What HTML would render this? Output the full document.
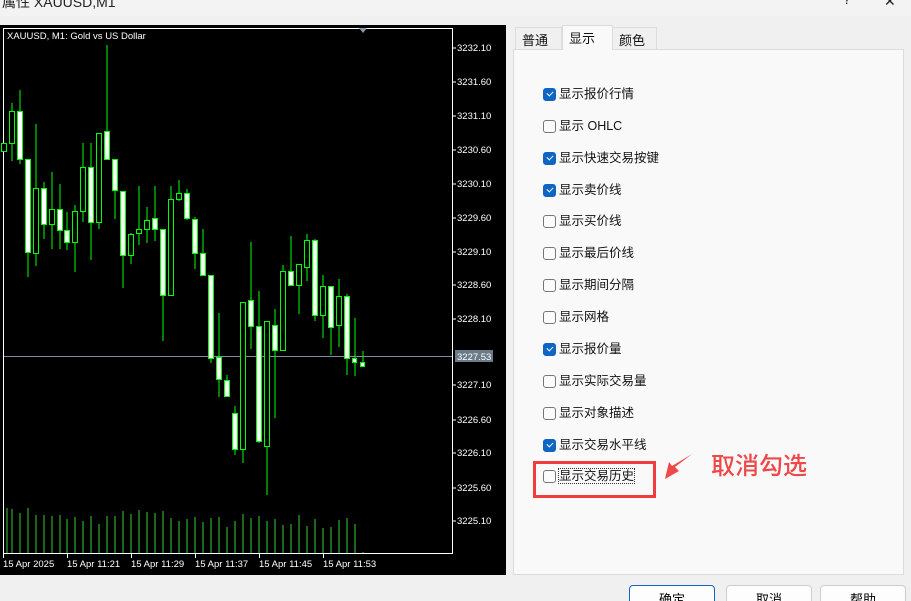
<!DOCTYPE html>
<html><head><meta charset="utf-8"><style>
*{margin:0;padding:0;box-sizing:border-box}
html,body{width:911px;height:601px;overflow:hidden}
body{background:#f0f0f0;font-family:"Liberation Sans","Noto Sans CJK SC",sans-serif;position:relative}
.title{position:absolute;left:0;top:0;width:911px;height:16px;background:#f3f3f3}
.title span{position:absolute;left:2px;top:-8px;font-size:14px;color:#222}
.chart{position:absolute;left:0;top:25px;width:506px;height:550px;background:#000}
.tab{position:absolute;top:26px;height:23px;border:1px solid #ddd;border-bottom:none;background:#f0f0f0;font-size:13px;padding:3px 0 0 6px;color:#111}
.panel{position:absolute;left:513px;top:49px;width:391px;height:526px;background:#f9f9f9;border:1px solid #dcdcdc}
.row{position:absolute;left:543px;font-size:12.5px;color:#111;height:14px;line-height:14px}
.cb{position:absolute;left:0;top:0;width:13px;height:13px;border:1px solid #777;border-radius:3px;background:#fbfbfb}
.cb.on{background:#0f66c2;border-color:#0f66c2}
.cb.on:after{content:"";position:absolute;left:3px;top:2px;width:5px;height:3px;border-left:1.3px solid #fff;border-bottom:1.3px solid #fff;transform:rotate(-45deg)}
.row span{position:absolute;left:16px;top:-1px;white-space:nowrap}
.btn{position:absolute;top:585px;height:24px;width:86px;border:1px solid #ccc;border-radius:4px;background:#fdfdfd;font-size:13px;text-align:center;padding-top:3px}
</style></head><body>
<div class="title"><span>属性 XAUUSD,M1</span><span style="left:843px;top:-9px">?</span><span style="left:884px;top:-7px">✕</span></div>
<div class="chart"></div>
<svg style="position:absolute;left:0;top:0" width="506" height="601" font-family="Liberation Sans" font-size="9.5">
<rect x="3.5" y="28.5" width="449" height="525" fill="none" stroke="#fff"/>
<polygon points="359,28 367,28 363,33" fill="#8a96a3"/>
<text x="7" y="39" fill="#fff" font-size="9.5">XAUUSD, M1:  Gold vs US Dollar</text>
<line x1="4" y1="356.5" x2="452" y2="356.5" stroke="#7d8da0"/>
<g stroke="#00ff00" stroke-width="1">
<line x1="12" y1="103" x2="12" y2="161"/><line x1="20" y1="90" x2="20" y2="164"/><line x1="28" y1="159" x2="28" y2="277"/><line x1="36" y1="124" x2="36" y2="266"/><line x1="44" y1="182" x2="44" y2="239"/><line x1="52" y1="172" x2="52" y2="249"/><line x1="60" y1="184" x2="60" y2="249"/><line x1="67" y1="212" x2="67" y2="250"/><line x1="75" y1="205" x2="75" y2="272"/><line x1="83" y1="143" x2="83" y2="222"/><line x1="91" y1="143" x2="91" y2="260"/><line x1="99" y1="133" x2="99" y2="229"/><line x1="107" y1="45" x2="107" y2="159"/><line x1="115" y1="159" x2="115" y2="219"/><line x1="123" y1="191" x2="123" y2="288"/><line x1="131" y1="233" x2="131" y2="264"/><line x1="139" y1="186" x2="139" y2="245"/><line x1="147" y1="207" x2="147" y2="243"/><line x1="155" y1="186" x2="155" y2="241"/><line x1="163" y1="229" x2="163" y2="341"/><line x1="171" y1="186" x2="171" y2="295"/><line x1="179" y1="180" x2="179" y2="201"/><line x1="187" y1="189" x2="187" y2="220"/><line x1="195" y1="217" x2="195" y2="269"/><line x1="203" y1="229" x2="203" y2="275"/><line x1="211" y1="275" x2="211" y2="363"/><line x1="219" y1="313" x2="219" y2="397"/><line x1="227" y1="375" x2="227" y2="397"/><line x1="235" y1="406" x2="235" y2="455"/><line x1="243" y1="302" x2="243" y2="463"/><line x1="251" y1="242" x2="251" y2="349"/><line x1="259" y1="291" x2="259" y2="443"/><line x1="267" y1="321" x2="267" y2="495"/><line x1="275" y1="309" x2="275" y2="418"/><line x1="283" y1="265" x2="283" y2="350"/><line x1="291" y1="236" x2="291" y2="285"/><line x1="299" y1="264" x2="299" y2="314"/><line x1="307" y1="234" x2="307" y2="281"/><line x1="315" y1="239" x2="315" y2="321"/><line x1="323" y1="275" x2="323" y2="338"/><line x1="331" y1="286" x2="331" y2="355"/><line x1="339" y1="279" x2="339" y2="347"/><line x1="347" y1="294" x2="347" y2="375"/><line x1="355" y1="318" x2="355" y2="376"/><line x1="363" y1="351" x2="363" y2="367"/>
</g>
<g stroke="#00ff00" stroke-width="1">
<rect x="1.5" y="143.5" width="5" height="8" fill="#000"/>
<rect x="9.5" y="111.5" width="5" height="32" fill="#000"/>
<rect x="17.5" y="111.5" width="5" height="48" fill="#fff"/>
<rect x="25.5" y="159.5" width="5" height="93" fill="#fff"/>
<rect x="33.5" y="188.5" width="5" height="65" fill="#000"/>
<rect x="41.5" y="188.5" width="5" height="36" fill="#fff"/>
<rect x="49.5" y="209.5" width="5" height="15" fill="#000"/>
<rect x="57.5" y="209.5" width="5" height="21" fill="#fff"/>
<rect x="64.5" y="230.5" width="5" height="12" fill="#fff"/>
<rect x="72.5" y="211.5" width="5" height="31" fill="#000"/>
<rect x="80.5" y="167.5" width="5" height="44" fill="#000"/>
<rect x="88.5" y="167.5" width="5" height="55" fill="#fff"/>
<rect x="96.5" y="133.5" width="5" height="89" fill="#000"/>
<rect x="104.5" y="131.5" width="5" height="28" fill="#fff"/>
<rect x="112.5" y="159.5" width="5" height="31" fill="#fff"/>
<rect x="120.5" y="191.5" width="5" height="64" fill="#fff"/>
<rect x="128.5" y="234.5" width="5" height="21" fill="#000"/>
<rect x="136.5" y="229.5" width="5" height="4" fill="#000"/>
<rect x="144.5" y="220.5" width="5" height="9" fill="#000"/>
<rect x="152.5" y="218.5" width="5" height="11" fill="#fff"/>
<rect x="160.5" y="229.5" width="5" height="66" fill="#fff"/>
<rect x="168.5" y="199.5" width="5" height="96" fill="#000"/>
<rect x="176.5" y="193.5" width="5" height="6" fill="#000"/>
<rect x="184.5" y="193.5" width="5" height="25" fill="#fff"/>
<rect x="192.5" y="219.5" width="5" height="34" fill="#fff"/>
<rect x="200.5" y="253.5" width="5" height="22" fill="#fff"/>
<rect x="208.5" y="275.5" width="5" height="83" fill="#fff"/>
<rect x="216.5" y="357.5" width="5" height="22" fill="#fff"/>
<rect x="224.5" y="380.5" width="5" height="16" fill="#fff"/>
<rect x="232.5" y="413.5" width="5" height="36" fill="#fff"/>
<rect x="240.5" y="302.5" width="5" height="147" fill="#000"/>
<rect x="248.5" y="300.5" width="5" height="26" fill="#fff"/>
<rect x="256.5" y="326.5" width="5" height="115" fill="#fff"/>
<rect x="264.5" y="321.5" width="5" height="125" fill="#000"/>
<rect x="272.5" y="325.5" width="5" height="25" fill="#fff"/>
<rect x="280.5" y="271.5" width="5" height="79" fill="#000"/>
<rect x="288.5" y="271.5" width="5" height="14" fill="#fff"/>
<rect x="296.5" y="264.5" width="5" height="21" fill="#000"/>
<rect x="304.5" y="240.5" width="5" height="27" fill="#000"/>
<rect x="312.5" y="240.5" width="5" height="75" fill="#fff"/>
<rect x="320.5" y="286.5" width="5" height="29" fill="#000"/>
<rect x="328.5" y="286.5" width="5" height="41" fill="#fff"/>
<rect x="336.5" y="296.5" width="5" height="29" fill="#000"/>
<rect x="344.5" y="296.5" width="5" height="62" fill="#fff"/>
<rect x="352.5" y="358.5" width="4" height="4" fill="#fff"/>
<rect x="360.5" y="362.5" width="4" height="4" fill="#fff"/>
</g>
<g stroke="#33cc33" stroke-width="1">
<path d="M7 508V553M12 509V553M20 513V553M28 508V553M36 515V553M44 515V553M52 516V553M60 515V553M67 519V553M75 517V553M83 521V553M91 516V553M99 524V553M107 516V553M115 516V553M123 511V553M131 514V553M139 510V553M147 512V553M155 513V553M163 511V553M171 518V553M179 521V553M187 519V553M195 517V553M203 522V553M211 518V553M219 517V553M227 527V553M235 521V553M243 514V553M251 518V553M259 516V553M267 521V553M275 519V553M283 525V553M291 524V553M299 515V553M307 526V553M315 519V553M323 528V553M331 527V553M339 520V553M347 518V553M355 524V553M363 552V553"/>
</g>
<g stroke="#fff"><line x1="452.5" y1="28" x2="452.5" y2="554"/>
<path d="M452 48h4M452 82h4M452 116h4M452 150h4M452 184h4M452 218h4M452 252h4M452 285h4M452 319h4M452 385h4M452 420h4M452 453h4M452 488h4M452 521h4M3.5 553v5M67.5 553v5M131.5 553v5M195.5 553v5M259.5 553v5M323.5 553v5"/></g>
<g fill="#fff"><text x="457" y="51">3232.10</text><text x="457" y="85">3231.60</text><text x="457" y="119">3231.10</text><text x="457" y="153">3230.60</text><text x="457" y="187">3230.10</text><text x="457" y="221">3229.60</text><text x="457" y="255">3229.10</text><text x="457" y="288">3228.60</text><text x="457" y="322">3228.10</text><text x="457" y="388">3227.10</text><text x="457" y="423">3226.60</text><text x="457" y="456">3226.10</text><text x="457" y="491">3225.60</text><text x="457" y="524">3225.10</text>
<rect x="455" y="350" width="38" height="12" fill="#6a7a88"/><text x="457" y="360">3227.53</text>
<text x="3" y="567">15 Apr 2025</text><text x="67" y="567">15 Apr 11:21</text><text x="131" y="567">15 Apr 11:29</text><text x="195" y="567">15 Apr 11:37</text><text x="259" y="567">15 Apr 11:45</text><text x="323" y="567">15 Apr 11:53</text></g>
</svg>
<div class="panel"></div>
<div class="tab" style="left:515px;width:47px;top:27px;height:22px;padding-top:2px">普通</div>
<div class="tab" style="left:562px;width:51px;top:25px;height:25px;background:#f9f9f9;border-color:#dcdcdc;z-index:2;padding-top:2px">显示</div>
<div class="tab" style="left:612px;width:45px;top:27px;height:22px;padding-top:2px">颜色</div>
<div class="row" style="top:88px"><div class="cb on"></div><span>显示报价行情</span></div>
<div class="row" style="top:120px"><div class="cb"></div><span>显示 OHLC</span></div>
<div class="row" style="top:152px"><div class="cb on"></div><span>显示快速交易按键</span></div>
<div class="row" style="top:184px"><div class="cb on"></div><span>显示卖价线</span></div>
<div class="row" style="top:215px"><div class="cb"></div><span>显示买价线</span></div>
<div class="row" style="top:247px"><div class="cb"></div><span>显示最后价线</span></div>
<div class="row" style="top:279px"><div class="cb"></div><span>显示期间分隔</span></div>
<div class="row" style="top:311px"><div class="cb"></div><span>显示网格</span></div>
<div class="row" style="top:343px"><div class="cb on"></div><span>显示报价量</span></div>
<div class="row" style="top:375px"><div class="cb"></div><span>显示实际交易量</span></div>
<div class="row" style="top:407px"><div class="cb"></div><span>显示对象描述</span></div>
<div class="row" style="top:439px"><div class="cb on"></div><span>显示交易水平线</span></div>
<div class="row" style="top:470px"><div class="cb"></div><span style="outline:1px dotted #333">显示交易历史</span></div>
<div style="position:absolute;left:533px;top:461px;width:123px;height:37px;border:3px solid #f03c3c"></div>
<svg style="position:absolute;left:660px;top:450px" width="40" height="35"><polygon points="32,4 15,17 19,21 5,29 9,12 12,16" fill="#f04848"/></svg>
<div style="position:absolute;left:711px;top:449px;font-size:24px;color:#f04848;font-family:'Noto Sans CJK SC',sans-serif;line-height:30px;font-weight:500">取消勾选</div>
<div class="btn" style="left:629px;border:1px solid #0f66c2">确定</div>
<div class="btn" style="left:726px">取消</div>
<div class="btn" style="left:820px">帮助</div>
</body></html>
